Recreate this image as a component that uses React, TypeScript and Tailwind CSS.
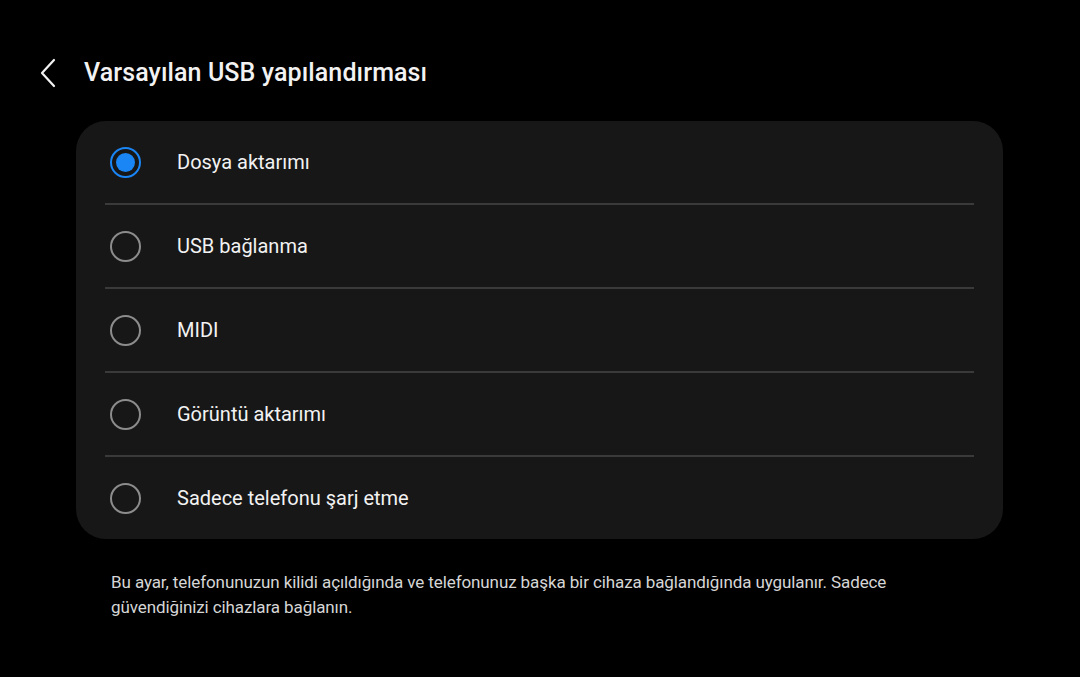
import React, { useState } from 'react';

const options = ['Dosya aktarımı', 'USB bağlanma', 'MIDI', 'Görüntü aktarımı', 'Sadece telefonu şarj etme'];

const Radio = ({ checked }: { checked: boolean }) =>
  checked ? (
    <span className="flex h-[31px] w-[31px] items-center justify-center rounded-full border-2 border-[#1a85f5]">
      <span className="h-[19px] w-[19px] rounded-full bg-[#1a85f5]" />
    </span>
  ) : (
    <span className="h-[31px] w-[31px] rounded-full border-2 border-[#8c8c8c]" />
  );

export default function App() {
  const [selected, setSelected] = useState(0);

  return (
    <div className="h-[677px] w-[1080px] bg-black text-[#f2f2f2]" style={{ fontFamily: 'Roboto, "Noto Sans", sans-serif' }}>
      <div className="flex h-[121px] items-start pt-[56px]">
        <button className="ml-[36px] flex h-[34px] w-[24px] items-center justify-center" aria-label="Geri">
          <svg width="18" height="30" viewBox="0 0 18 30" fill="none">
            <path d="M15 2 L3 15 L15 28" stroke="#f2f2f2" strokeWidth="2.2" strokeLinecap="round" strokeLinejoin="round" />
          </svg>
        </button>
        <h1 className="ml-[24px] text-[25px] font-medium leading-[34px] tracking-[0.1px]">Varsayılan USB yapılandırması</h1>
      </div>

      <div className="ml-[76px] w-[927px] rounded-[30px] bg-[#171717]">
        {options.map((label, i) => (
          <div key={label}>
            {i > 0 && <div className="mx-[29px] h-[2px] bg-[#3a3a3a]" />}
            <button
              onClick={() => setSelected(i)}
              className="flex h-[82px] w-full items-center pl-[34px] text-left"
            >
              <Radio checked={selected === i} />
              <span className="ml-[36px] text-[20px] leading-none">{label}</span>
            </button>
          </div>
        ))}
      </div>

      <p className="ml-[111px] mt-[31px] w-[820px] text-[17px] leading-[25px] tracking-[-0.1px] text-[#d6d6d6]">
        Bu ayar, telefonunuzun kilidi açıldığında ve telefonunuz başka bir cihaza bağlandığında uygulanır. Sadece
        güvendiğinizi cihazlara bağlanın.
      </p>
    </div>
  );
}
